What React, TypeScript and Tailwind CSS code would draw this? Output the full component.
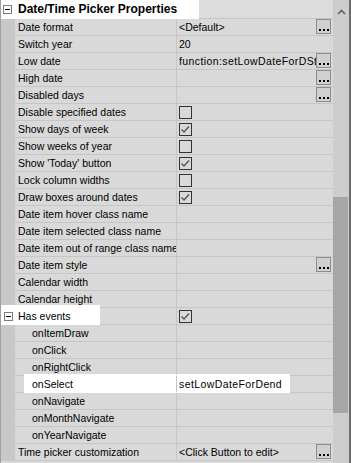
import React from "react";

type Row = {
  name: string;
  indent?: boolean;
  value?: string;
  wide?: boolean;
  check?: boolean;
  btn?: boolean;
  expander?: boolean;
  hl?: "events" | "select";
};

const rows: Row[] = [
  { name: "Date format", value: "<Default>", btn: true },
  { name: "Switch year", value: "20" },
  { name: "Low date", value: "function:setLowDateForDSta", wide: true, btn: true },
  { name: "High date", btn: true },
  { name: "Disabled days", btn: true },
  { name: "Disable specified dates", check: false },
  { name: "Show days of week", check: true },
  { name: "Show weeks of year", check: false },
  { name: "Show 'Today' button", check: true },
  { name: "Lock column widths", check: false },
  { name: "Draw boxes around dates", check: true },
  { name: "Date item hover class name" },
  { name: "Date item selected class name" },
  { name: "Date item out of range class name" },
  { name: "Date item style", btn: true },
  { name: "Calendar width" },
  { name: "Calendar height" },
  { name: "Has events", check: true, expander: true, hl: "events" },
  { name: "onItemDraw", indent: true },
  { name: "onClick", indent: true },
  { name: "onRightClick", indent: true },
  { name: "onSelect", indent: true, value: "setLowDateForDend", wide: true, hl: "select" },
  { name: "onNavigate", indent: true },
  { name: "onMonthNavigate", indent: true },
  { name: "onYearNavigate", indent: true },
  { name: "Time picker customization", value: "<Click Button to edit>", btn: true },
];

function Expander() {
  return (
    <div className="flex h-[9px] w-[9px] items-center justify-center border border-[#7d7d7d] bg-white">
      <div className="h-[1px] w-[5px] bg-black" />
    </div>
  );
}

function DotsButton() {
  return (
    <div className="flex h-[15px] w-[15px] shrink-0 items-end justify-center gap-[2px] border border-[#8c8c8c] bg-[#d0d0d0] pb-[2px]">
      <div className="h-[2px] w-[2px] bg-black" />
      <div className="h-[2px] w-[2px] bg-black" />
      <div className="h-[2px] w-[2px] bg-black" />
    </div>
  );
}

function CheckBox({ checked }: { checked: boolean }) {
  return (
    <div className="h-[13px] w-[13px] border border-[#333333] bg-[#d9d9d9]">
      {checked && (
        <svg width="11" height="11" viewBox="0 0 11 11">
          <path d="M1.5 5.5 L4 8 L9 2.5" fill="none" stroke="#555555" strokeWidth="1.4" />
        </svg>
      )}
    </div>
  );
}

function PropRow({ r }: { r: Row }) {
  return (
    <div className="relative flex h-[17px] shrink-0">
      <div className="flex w-[14px] shrink-0 items-center justify-center bg-[#c8c8c8]">
        {r.expander && (
          <div className="relative z-10">
            <Expander />
          </div>
        )}
      </div>
      {r.hl === "events" && (
        <div className="absolute left-0 top-[-3px] h-[20px] w-[99px] bg-white" />
      )}
      {r.hl === "select" && (
        <div className="absolute left-[23px] top-[-2px] h-[19px] w-[266px] bg-white" />
      )}
      <div className="flex min-w-0 flex-1 border-b border-[#c6c6c6]">
        <div
          className={
            "relative z-10 flex w-[162px] shrink-0 items-center overflow-hidden whitespace-nowrap border-r border-[#c6c6c6] " +
            (r.indent ? "pl-[17px]" : "pl-[3px]")
          }
        >
          {r.name}
        </div>
        <div className="relative z-10 flex min-w-0 flex-1 items-center pl-[2px] pr-[2px]">
          {r.check !== undefined ? (
            <CheckBox checked={r.check} />
          ) : (
            <div
              className={
                "min-w-0 flex-1 overflow-hidden whitespace-nowrap " + (r.wide ? "tracking-[0.4px]" : "")
              }
            >
              {r.value ?? ""}
            </div>
          )}
          {r.btn && (
            <div className="ml-auto shrink-0 self-start">
              <DotsButton />
            </div>
          )}
        </div>
      </div>
    </div>
  );
}

export default function App() {
  return (
    <div className="flex h-[463px] w-[351px] overflow-hidden border-l border-r-2 border-l-[#a0a0a0] border-r-[#6b6b6b] bg-[#c8c8c8] font-['Liberation_Sans',Arial,sans-serif] text-[10.5px] leading-none text-black">
      <div className="flex w-[332px] shrink-0 flex-col bg-[#d9d9d9]">
        <div className="relative flex h-[19px] shrink-0 items-center border-b border-[#c6c6c6] bg-[#dcdcdc]">
          <div className="absolute left-0 top-0 h-[19px] w-[198px] bg-white" />
          <div className="relative z-10 ml-[2px] flex w-[12px] items-center">
            <Expander />
          </div>
          <div className="relative z-10 ml-[3px] text-[12px] font-bold">Date/Time Picker Properties</div>
        </div>
        <div className="flex flex-col">
          {rows.map((r, i) => (
            <PropRow key={i} r={r} />
          ))}
        </div>
      </div>
      <div className="flex w-[16px] shrink-0 flex-col bg-[#cdcdcd]">
        <div className="flex h-[24px] shrink-0 items-center justify-center">
          <svg width="9" height="6" viewBox="0 0 9 6">
            <path d="M1 5 L4.5 1.5 L8 5" fill="none" stroke="#606060" strokeWidth="1.6" />
          </svg>
        </div>
        <div className="h-[173px] shrink-0" />
        <div className="h-[216px] w-[15px] shrink-0 bg-[#a6a6a6]" />
      </div>
    </div>
  );
}
